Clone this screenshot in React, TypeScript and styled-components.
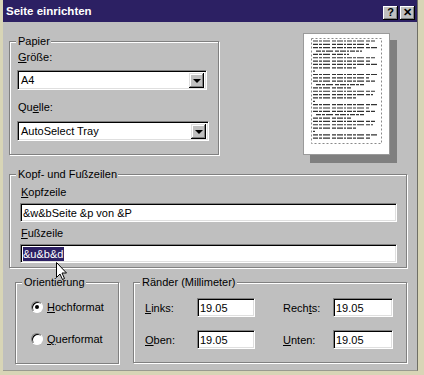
import styled, { createGlobalStyle } from 'styled-components';

const GlobalStyle = createGlobalStyle`
  html, body {
    margin: 0;
    padding: 0;
    background: #d8d5b6;
  }
  body {
    font-family: "Liberation Sans", Arial, sans-serif;
    font-size: 11px;
    color: #000;
  }
`;

const Frame = styled.div`
  position: relative;
  width: 424px;
  height: 375px;
  background: #d8d5b6;
  overflow: hidden;
`;

const Dialog = styled.div`
  box-sizing: border-box;
  margin-left: 3px;
  width: 415px;
  height: 371px;
  background: #bfbfbf;
  border-right: 1px solid #6f6f66;
  border-bottom: 1px solid #9a9a90;
`;

const TitleBar = styled.div`
  height: 22px;
  background: #2c2063;
  display: flex;
  align-items: center;
  padding: 0 2px 0 3px;
`;

const Title = styled.div`
  flex: 1;
  color: #fff;
  font-weight: bold;
  font-size: 11.5px;
  margin-top: -1px;
`;

const TitleButton = styled.div`
  box-sizing: border-box;
  width: 15px;
  height: 14px;
  margin-left: 2px;
  margin-top: 3px;
  background: #c0c0c0;
  box-shadow: inset -1px -1px #000, inset 1px 1px #fff, inset -2px -2px #808080;
  display: flex;
  align-items: center;
  justify-content: center;
  font-weight: bold;
  font-size: 11px;
  line-height: 1;
`;

const Body = styled.div`
  padding-left: 6px;
`;

const TopRow = styled.div`
  display: flex;
  align-items: flex-start;
  padding-top: 11px;
`;

const Group = styled.div<{ $w: number; $h: number }>`
  position: relative;
  box-sizing: border-box;
  width: ${(p) => p.$w}px;
  height: ${(p) => p.$h}px;
  border: 1px solid #808080;
  box-shadow: inset 1px 1px 0 #fff, 1px 1px 0 #fff;
`;

const Legend = styled.div`
  position: absolute;
  top: -7px;
  left: 6px;
  padding: 0 1px 0 2px;
  background: #bfbfbf;
  line-height: 13px;
  white-space: nowrap;
`;

const PaperGroup = styled(Group)`
  margin-top: 8px;
  padding: 8px 0 0 7px;
`;

const Label = styled.div<{ $mt?: number }>`
  line-height: 14px;
  margin-top: ${(p) => p.$mt ?? 0}px;
  margin-left: 1px;
  white-space: nowrap;
`;

const Combo = styled.div<{ $w: number; $mt: number }>`
  box-sizing: border-box;
  width: ${(p) => p.$w}px;
  height: 20px;
  margin-top: ${(p) => p.$mt}px;
  background: #fff;
  border-top: 1px solid #808080;
  border-left: 1px solid #808080;
  border-bottom: 1px solid #fff;
  border-right: 1px solid #fff;
  box-shadow: inset 1px 1px #000, inset -1px -1px #dfdfdf;
  display: flex;
  align-items: center;
  padding: 0 2px 0 3px;
`;

const ComboText = styled.div`
  flex: 1;
  white-space: nowrap;
`;

const ArrowButton = styled.div`
  box-sizing: border-box;
  width: 15px;
  height: 15px;
  background: #c0c0c0;
  box-shadow: inset -1px -1px #000, inset 1px 1px #dfdfdf, inset -2px -2px #808080, inset 2px 2px #fff;
  display: flex;
  align-items: center;
  justify-content: center;
  &::after {
    content: '';
    border-left: 4px solid transparent;
    border-right: 4px solid transparent;
    border-top: 4px solid #000;
    margin-top: 1px;
  }
`;

const Preview = styled.div`
  margin-left: 84px;
  width: 94px;
  height: 130px;
`;

const HeaderGroup = styled(Group)`
  margin-top: 11px;
  padding: 10px 0 0 10px;
`;

const Field = styled.div<{ $w: number; $mt: number }>`
  box-sizing: border-box;
  width: ${(p) => p.$w}px;
  height: 19px;
  margin-top: ${(p) => p.$mt}px;
  background: #fff;
  border-top: 1px solid #808080;
  border-left: 1px solid #808080;
  border-bottom: 1px solid #fff;
  border-right: 1px solid #fff;
  box-shadow: inset 1px 1px #000, inset -1px -1px #dfdfdf;
  display: flex;
  align-items: center;
  padding-left: 2px;
  white-space: nowrap;
`;

const Selected = styled.span`
  background: #2c2063;
  color: #fff;
  padding: 1px 1px 1px 0;
`;

const BottomRow = styled.div`
  display: flex;
  align-items: flex-start;
  margin-top: 14px;
`;

const OrientGroup = styled(Group)`
  margin-left: 6px;
  padding: 17px 0 0 15px;
  display: flex;
  flex-direction: column;
  gap: 18px;
`;

const RadioRow = styled.div`
  display: flex;
  align-items: center;
  height: 14px;
  gap: 4px;
`;

const RadioCircle = styled.div<{ $checked?: boolean }>`
  box-sizing: border-box;
  width: 12px;
  height: 12px;
  border-radius: 50%;
  background: #fff;
  border: 1px solid;
  border-color: #808080 #fff #fff #808080;
  box-shadow: inset 1px 1px #000;
  display: flex;
  align-items: center;
  justify-content: center;
  &::after {
    content: '';
    width: 4px;
    height: 4px;
    border-radius: 50%;
    background: ${(p) => (p.$checked ? '#000' : 'transparent')};
  }
`;

const MarginGroup = styled(Group)`
  margin-left: 14px;
  padding: 15px 0 0 11px;
  display: grid;
  grid-template-columns: 52px 86px 50px 60px;
  grid-template-rows: 19px 19px;
  row-gap: 13px;
  align-content: start;
  align-items: center;
`;

const SmallField = styled(Field)`
  margin-top: 0;
`;

const Cursor = styled.svg`
  position: absolute;
  left: 56px;
  top: 262px;
`;

function U({ children }: { children: string }) {
  return <span style={{ textDecoration: 'underline' }}>{children}</span>;
}

// Zeilen der Vorschau: [Einzug, Länge]
const previewLines: [number, number][] = [
  [0, 62], [0, 56], [0, 64], [3, 46], [0, 36], [0, 62], [0, 58], [0, 64], [0, 44], [0, 2],
  [0, 64], [0, 56], [0, 62], [3, 48], [0, 38], [0, 62], [0, 60], [0, 44], [0, 2],
  [0, 64], [0, 56], [0, 62], [3, 48], [0, 38], [0, 62], [0, 60], [0, 44], [0, 2],
  [0, 64], [0, 58],
];

function PagePreview() {
  return (
    <svg width="94" height="130" viewBox="0 0 94 130">
      <rect x="7" y="7" width="87" height="123" fill="#7f7f7f" />
      <rect x="0.5" y="0.5" width="86" height="121" fill="#fff" stroke="#9a9a9a" />
      <rect x="8.5" y="5.5" width="70" height="105" fill="none" stroke="#8a8a8a" strokeDasharray="2 2" />
      {previewLines.map(([x, w], i) => {
        const y = 8 + i * 3.35;
        return (
          <line
            key={i}
            x1={10 + x}
            x2={10 + x + w}
            y1={y}
            y2={y}
            stroke="#333"
            strokeWidth={1.2}
            strokeDasharray={w < 5 ? undefined : '5 1 3 1 7 2 4 1 6 1 2 1'}
          />
        );
      })}
    </svg>
  );
}

export default function App() {
  return (
    <>
      <GlobalStyle />
      <Frame>
        <Dialog>
          <TitleBar>
            <Title>Seite einrichten</Title>
            <TitleButton>?</TitleButton>
            <TitleButton>✕</TitleButton>
          </TitleBar>
          <Body>
            <TopRow>
              <PaperGroup $w={210} $h={114}>
                <Legend>Papier</Legend>
                <Label>
                  <U>G</U>röße:
                </Label>
                <Combo $w={190} $mt={6}>
                  <ComboText>A4</ComboText>
                  <ArrowButton />
                </Combo>
                <Label $mt={10}>
                  Qu<U>e</U>lle:
                </Label>
                <Combo $w={192} $mt={7}>
                  <ComboText>AutoSelect Tray</ComboText>
                  <ArrowButton />
                </Combo>
              </PaperGroup>
              <Preview>
                <PagePreview />
              </Preview>
            </TopRow>
            <HeaderGroup $w={398} $h={94}>
              <Legend>Kopf- und Fußzeilen</Legend>
              <Label>
                <U>K</U>opfzeile
              </Label>
              <Field $w={377} $mt={4}>
                &amp;w&amp;bSeite &amp;p von &amp;P
              </Field>
              <Label $mt={4}>
                <U>F</U>ußzeile
              </Label>
              <Field $w={377} $mt={4}>
                <Selected>&amp;u&amp;b&amp;d</Selected>
              </Field>
            </HeaderGroup>
            <BottomRow>
              <OrientGroup $w={104} $h={82}>
                <Legend>Orientierung</Legend>
                <RadioRow>
                  <RadioCircle $checked />
                  <span>
                    <U>H</U>ochformat
                  </span>
                </RadioRow>
                <RadioRow>
                  <RadioCircle />
                  <span>
                    <U>Q</U>uerformat
                  </span>
                </RadioRow>
              </OrientGroup>
              <MarginGroup $w={274} $h={81}>
                <Legend>Ränder (Millimeter)</Legend>
                <span>
                  <U>L</U>inks:
                </span>
                <SmallField $w={58} $mt={0}>
                  19.05
                </SmallField>
                <span>
                  Rech<U>t</U>s:
                </span>
                <SmallField $w={60} $mt={0}>
                  19.05
                </SmallField>
                <span>
                  <U>O</U>ben:
                </span>
                <SmallField $w={58} $mt={0}>
                  19.05
                </SmallField>
                <span>
                  <U>U</U>nten:
                </span>
                <SmallField $w={60} $mt={0}>
                  19.05
                </SmallField>
              </MarginGroup>
            </BottomRow>
          </Body>
        </Dialog>
        <Cursor width="12" height="19" viewBox="0 0 12 19">
          <path d="M0.5 0.5 L0.5 15.5 L4 12 L6.5 17.5 L8.5 16.5 L6 11 L10.5 11 Z" fill="#fff" stroke="#000" strokeWidth="1" />
        </Cursor>
      </Frame>
    </>
  );
}
